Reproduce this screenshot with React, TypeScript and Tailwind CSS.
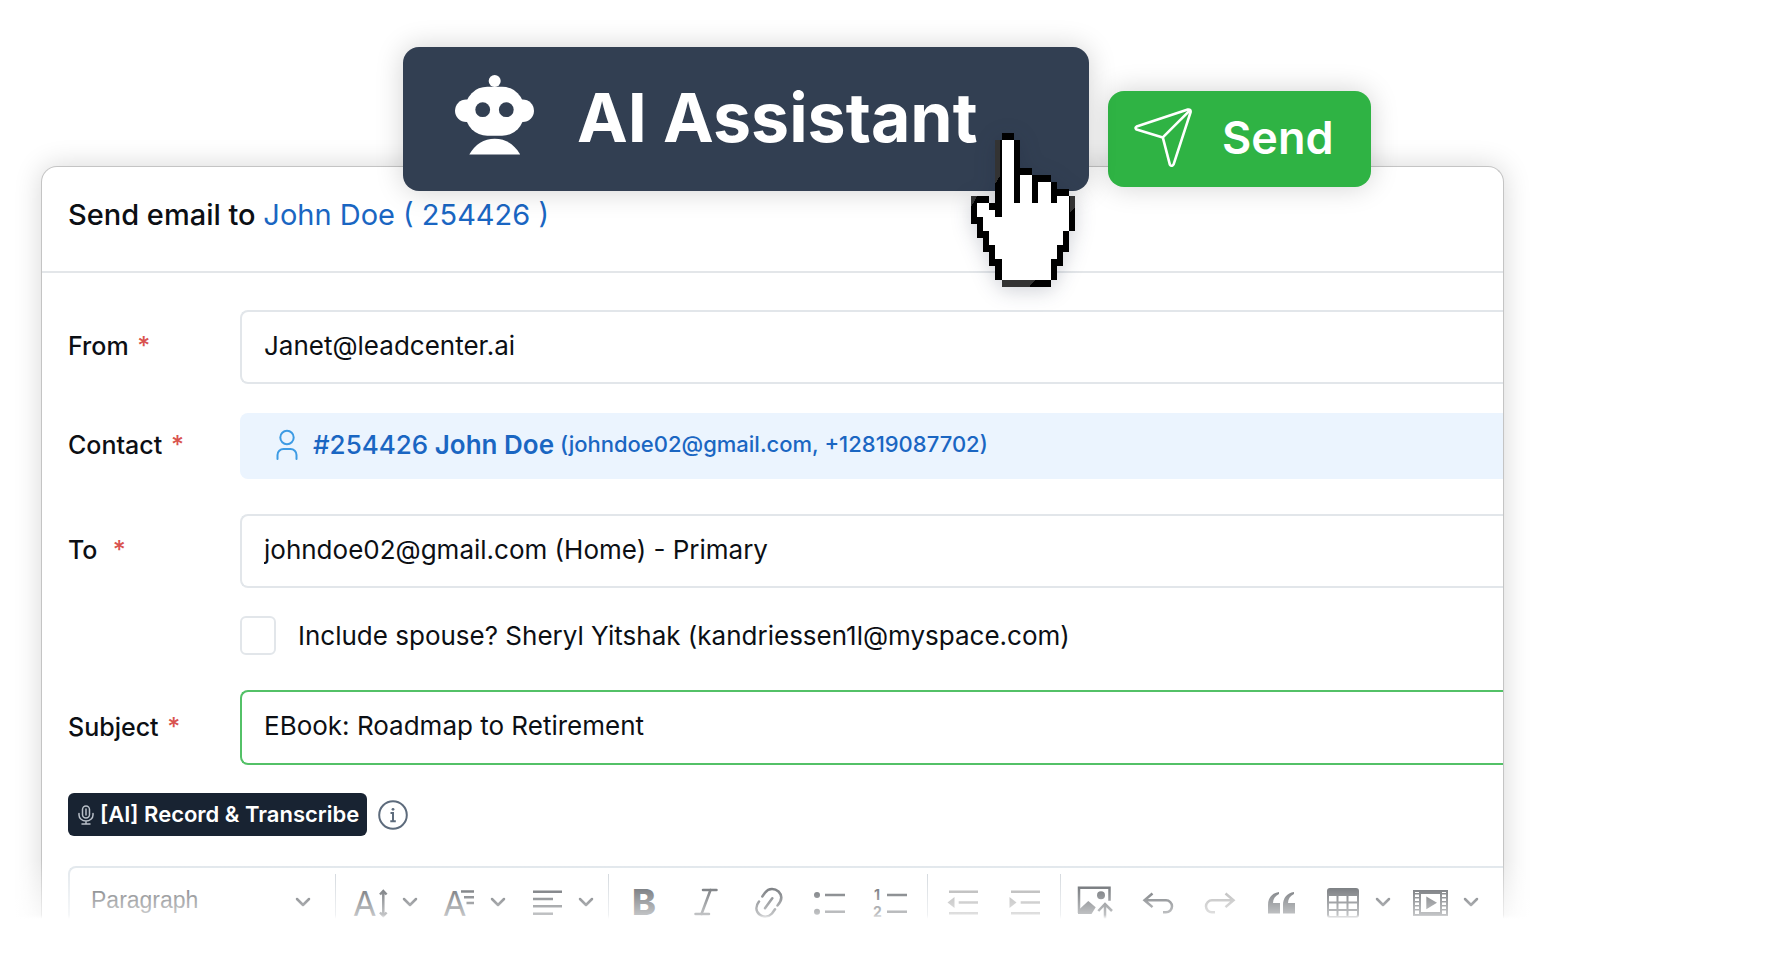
import { useState } from "react";
import type { ReactNode } from "react";
import { ChevronDown, Italic } from "lucide-react";

const ICON_TONE = "size-[34px] shrink-0 overflow-visible fill-none stroke-current stroke-[2.5]";

function RobotIcon() {
  return (
    <svg className="w-[79px] h-20 mb-1 shrink-0" viewBox="0 0 79 80" fill="#fff" aria-hidden="true">
      <circle cx="39.7" cy="6" r="6" />
      <circle cx="11.3" cy="35.7" r="11.3" />
      <circle cx="67.7" cy="35.7" r="11.3" />
      <rect x="10.3" y="11.7" width="58.8" height="49" rx="22" ry="22" />
      <circle cx="27.7" cy="34.7" r="7.4" fill="#323f52" />
      <circle cx="51.3" cy="34.7" r="7.4" fill="#323f52" />
      <path d="M14.3 79.6C20 69 29 63.7 39.7 63.7S59.4 69 65.2 79.6z" />
    </svg>
  );
}

function PlaneIcon() {
  return (
    <svg
      className="w-[58px] h-[59px] shrink-0"
      viewBox="0 0 58 59"
      fill="none"
      stroke="#fff"
      strokeWidth="2.6"
      strokeLinejoin="round"
      strokeLinecap="round"
      aria-hidden="true"
    >
      <path d="M53.8 1.6 2.6 18.6Q.4 20 2.6 21.6L28.8 29.4 35.8 56.4Q37.8 59.2 39.6 56.4L56.6 4.2Q57 1 53.8 1.6z" />
      <path d="M28.8 29.4 55.6 2.6" />
    </svg>
  );
}

// Outline cells of the pixel hand: [column, row, width, height]
const handCells = [
  [5, 0, 2, 1], [4, 1, 1, 11], [7, 1, 1, 9], [8, 5, 2, 1], [10, 6, 3, 1], [10, 7, 1, 3],
  [13, 7, 1, 3], [14, 8, 2, 1], [16, 9, 1, 5], [15, 14, 1, 3], [14, 16, 1, 3], [13, 18, 1, 3],
  [5, 21, 8, 1], [0, 9, 3, 1], [3, 10, 1, 1], [0, 10, 1, 3], [1, 12, 1, 3], [2, 14, 1, 3],
  [3, 16, 1, 3], [4, 18, 1, 3],
];

function HandCursor() {
  return (
    <svg
      className="absolute left-[568px] top-[86px] w-[104px] h-[154px] pointer-events-none overflow-visible drop-shadow-[0_4px_10px_rgba(20,30,60,0.2)]"
      viewBox="0 0 17 22"
      preserveAspectRatio="none"
      shapeRendering="crispEdges"
      aria-hidden="true"
    >
      <path
        fill="#fff"
        d="M5 1h2v5h3v1h3v2h3v5h-1v2h-1v2h-1v3H5v-3H4v-2H3v-2H2v-2H1v-3h2v1h2z"
      />
      {handCells.map(([x, y, w, h], i) => (
        <rect key={i} x={x} y={y} width={w} height={h} fill="#000" />
      ))}
      <path fill="#333" d="M4 1h.7v5.2L4 7.2zM5 21h5.5l-1 1H5zM0 9h1l-1 1.6zM16.2 9h.8v1.6l-.8.8z" />
    </svg>
  );
}

function FieldLabel({ htmlFor, text }: { htmlFor?: string; text: string }) {
  return (
    <label htmlFor={htmlFor} className="w-[172px] shrink-0 font-medium whitespace-pre">
      {text} <span className="ml-0.5 text-[#d9534f]">*</span>
    </label>
  );
}

function ToolButton({ label, muted, children }: { label: string; muted?: boolean; children: ReactNode }) {
  return (
    <button
      type="button"
      aria-label={label}
      className={`flex w-[62px] h-full shrink-0 items-center justify-center ${muted ? "text-[#999]" : "text-[#33383e]"}`}
    >
      {children}
    </button>
  );
}

function ToolDropdown({ label, children }: { label: string; children: ReactNode }) {
  return (
    <button
      type="button"
      aria-label={label}
      className="flex w-[88px] h-full shrink-0 items-center gap-[11px] pl-[13px] text-[#33383e]"
    >
      {children}
      <ChevronDown className="size-6 shrink-0" strokeWidth={2.5} />
    </button>
  );
}

function Divider() {
  return <div className="w-px h-14 mx-1 shrink-0 bg-[#ccd2d8]" />;
}

function EditorToolbar() {
  return (
    <div className="flex h-[70px] items-center rounded-tl-lg border-t-2 border-l-2 border-[#e0e6eb]">
      <div className="relative flex w-[261px] h-full shrink-0 items-center">
        <select
          aria-label="Text style"
          className="w-full h-full appearance-none pl-[21px] pb-1 font-['Liberation_Sans',Arial,sans-serif] text-[23px] text-[#4c4f53] outline-none"
        >
          <option>Paragraph</option>
        </select>
        <ChevronDown className="absolute right-4 size-6 pointer-events-none text-[#33383e]" strokeWidth={2.5} />
      </div>
      <Divider />
      <ToolDropdown label="Font size">
        <svg className={ICON_TONE} viewBox="0 0 34 34">
          <text x="0" y="31" fontSize="34" fill="currentColor" stroke="none">A</text>
          <path d="M30.3 6v25M27 9.5 30.3 6l3.3 3.5M27 27.5l3.3 3.5 3.3-3.5" />
        </svg>
      </ToolDropdown>
      <ToolDropdown label="Font family">
        <svg className={ICON_TONE} viewBox="0 0 34 34">
          <text x="2" y="31" fontSize="34" fill="currentColor" stroke="none">A</text>
          <path d="M20 6.5h13M23 12.2h10M25.5 18H33" />
        </svg>
      </ToolDropdown>
      <ToolDropdown label="Text alignment">
        <svg className={ICON_TONE} viewBox="0 0 34 34">
          <path d="M4 6.7h29M4 14h20M4 21.3h29M4 28.7h20" />
        </svg>
      </ToolDropdown>
      <Divider />
      <ToolButton label="Bold">
        <span className="text-4xl leading-[34px] font-extrabold">B</span>
      </ToolButton>
      <ToolButton label="Italic">
        <Italic className="size-9" strokeWidth={1.7} />
      </ToolButton>
      <ToolButton label="Link">
        <svg className={ICON_TONE} viewBox="0 0 34 34" strokeLinecap="round">
          <path d="M11.3 11.5 14 7.8C18 2.5 24 3.5 27.5 6.5 32 11 30.5 16 26.5 20.5M24 24.3 21 28.5C17.5 32.5 12 32.5 8.5 29.5 4.5 26 4.5 21 8 16.5M14 23.3l7.3-10" />
        </svg>
      </ToolButton>
      <ToolButton label="Bulleted list">
        <svg className={ICON_TONE} viewBox="0 0 34 34">
          <circle cx="4" cy="10" r="3" fill="currentColor" stroke="none" />
          <circle cx="4" cy="26.7" r="3" fill="currentColor" stroke="none" />
          <path d="M12 10h20M12 26.7h20" />
        </svg>
      </ToolButton>
      <ToolButton label="Numbered list">
        <svg className={ICON_TONE} viewBox="0 0 34 34">
          <text x="-1" y="15" fontSize="14" fontWeight="700" fill="currentColor" stroke="none">1</text>
          <text x="-2" y="32" fontSize="14" fontWeight="700" fill="currentColor" stroke="none">2</text>
          <path d="M12 10h20M12 26.7h20" />
        </svg>
      </ToolButton>
      <Divider />
      <ToolButton label="Decrease indent" muted>
        <svg className={ICON_TONE} viewBox="0 0 34 34">
          <path d="M3 6.7h29M3 28.3h29M12.7 17.5H32" />
          <path d="M1.5 17.5 8.5 12v11z" fill="currentColor" stroke="none" />
        </svg>
      </ToolButton>
      <ToolButton label="Increase indent" muted>
        <svg className={ICON_TONE} viewBox="0 0 34 34">
          <path d="M3 6.7h29M3 28.3h29M12.7 17.5H32" />
          <path d="M8.5 17.5 1.5 12v11z" fill="currentColor" stroke="none" />
        </svg>
      </ToolButton>
      <Divider />
      <ToolButton label="Insert image">
        <svg className={ICON_TONE} viewBox="0 0 34 34">
          <path d="M0 28V2.7h30.5v13" />
          <circle cx="22" cy="10.3" r="4" fill="currentColor" stroke="none" />
          <path d="M-1 29v-3.5l10.3-9.5 7.4 6.3L12.5 29z" fill="currentColor" stroke="none" />
          <path d="M26 34V19M19.3 26l6.7-7 7 7" />
        </svg>
      </ToolButton>
      <ToolButton label="Undo">
        <svg className={ICON_TONE} viewBox="0 0 34 34">
          <path d="M3.5 15.3H25a6 6 0 0 1 0 12h-3M11.5 8.5l-8 6.8 8 6.8" />
        </svg>
      </ToolButton>
      <ToolButton label="Redo" muted>
        <svg className={ICON_TONE} viewBox="0 0 34 34">
          <path d="M30.5 15.3H9a6 6 0 0 0 0 12h3M22.5 8.5l8 6.8-8 6.8" />
        </svg>
      </ToolButton>
      <ToolButton label="Block quote">
        <svg className={ICON_TONE} viewBox="0 0 34 34">
          <path
            d="M3 28.5V20C3 13 7 8 14 7v2C10 11 8 14 8 18h7v10.5zM18 28.5V20C18 13 22 8 29 7v2C25 11 23 14 23 18h7v10.5z"
            fill="currentColor"
            stroke="none"
          />
        </svg>
      </ToolButton>
      <ToolDropdown label="Insert table">
        <svg className={ICON_TONE} viewBox="0 0 34 34">
          <rect x="2" y="4" width="30" height="28" rx="2" strokeWidth="2" />
          <path d="M2 4h30v5.5H2z" fill="currentColor" stroke="none" />
          <path d="M2 10h30M2 17.5h30M2 25h30M11.5 10v22M21.5 10v22" strokeWidth="2" />
        </svg>
      </ToolDropdown>
      <ToolDropdown label="Insert media">
        <svg className={ICON_TONE} viewBox="0 0 34 34">
          <path d="M0 6h33v24H0zM6 6v24M27 6v24" strokeWidth="2" />
          <path d="M3 8v20M30 8v20" strokeWidth="4" strokeDasharray="1.5 2.5" />
          <path d="M6 8h21M6 28h21" strokeWidth="2" />
          <path d="M12.3 11.5 23 17.7l-10.7 6.5z" fill="currentColor" stroke="none" />
        </svg>
      </ToolDropdown>
    </div>
  );
}

const INPUT_STYLE =
  "h-full min-w-0 flex-1 rounded-l-lg border-2 border-r-0 bg-white pl-[22px] pb-1 text-[26px] outline-none";

export default function App() {
  const [from, setFrom] = useState("Janet@leadcenter.ai");
  const [to, setTo] = useState("johndoe02@gmail.com (Home) - Primary");
  const [subject, setSubject] = useState("EBook: Roadmap to Retirement");
  const [includeSpouse, setIncludeSpouse] = useState(false);

  return (
    <div className="min-h-screen overflow-hidden bg-white font-[Inter,sans-serif] text-[#0c0f14]">
      <div className="relative z-10 flex items-start gap-[19px] pt-[47px] pl-[403px]">
        <div className="relative">
          <button
            type="button"
            className="flex w-[686px] h-36 items-center rounded-2xl bg-[#323f52] pl-[52px] pb-1 text-[68px] leading-none font-bold text-white shadow-[0_0_28px_rgba(0,0,0,0.18)]"
          >
            <RobotIcon />
            <span className="ml-[43px]">AI Assistant</span>
          </button>
          <HandCursor />
        </div>
        <button
          type="button"
          className="mt-11 flex w-[263px] h-24 items-center rounded-2xl bg-[#2fb344] pl-[26px] pb-1 text-[45px] leading-none font-semibold text-white shadow-[0_0_28px_rgba(0,0,0,0.18)]"
        >
          <PlaneIcon />
          <span className="ml-[30px]">Send</span>
        </button>
      </div>

      <div className="relative">
        <main className="-mt-[25px] ml-[41px] mr-[277px] overflow-hidden rounded-t-2xl border border-b-0 border-[#c4c4c4] bg-white shadow-[0_0_28px_rgba(0,0,0,0.16)]">
          <header className="h-[106px] border-b-2 border-[#e3e6e9] pt-[27px] pl-[26px]">
            <h1 className="text-[29px] leading-[42px] font-medium">
              Send email to{" "}
              <a href="#contact" className="font-normal text-[#1a66c2]">John Doe ( 254426 )</a>
            </h1>
          </header>

          <form className="pt-[37px] pl-[26px] text-[25px]" onSubmit={(e) => e.preventDefault()}>
            <div className="flex h-[74px] items-center">
              <FieldLabel htmlFor="from" text="From" />
              <input
                id="from"
                className={`${INPUT_STYLE} border-[#e2e6ea]`}
                value={from}
                onChange={(e) => setFrom(e.target.value)}
              />
            </div>

            <div className="mt-[29px] flex h-[66px] items-center">
              <FieldLabel text="Contact" />
              <div className="flex h-full min-w-0 flex-1 items-center rounded-l-lg bg-[#ebf4fe] pl-9 pb-1 text-[#1a66c2]">
                <svg
                  className="w-[22px] h-8 mr-[15px] shrink-0"
                  viewBox="0 0 22 32"
                  fill="none"
                  stroke="#3d9be4"
                  strokeWidth="2"
                  strokeLinecap="round"
                  aria-hidden="true"
                >
                  <circle cx="11" cy="9.5" r="6.7" />
                  <path d="M1.5 31V27a6 6 0 0 1 6-6h7a6 6 0 0 1 6 6v4" />
                </svg>
                <span className="text-[26px] font-semibold">
                  <span className="font-medium">#254426</span> John Doe
                </span>
                <span className="ml-1.5 text-[22px] font-medium">(johndoe02@gmail.com, +12819087702)</span>
              </div>
            </div>

            <div className="mt-[35px] flex h-[74px] items-center">
              <FieldLabel htmlFor="to" text="To " />
              <input
                id="to"
                className={`${INPUT_STYLE} border-[#e2e6ea]`}
                value={to}
                onChange={(e) => setTo(e.target.value)}
              />
            </div>

            <div className="mt-[28px] flex items-center pl-[172px]">
              <input
                id="spouse"
                type="checkbox"
                className="w-9 h-[39px] appearance-none rounded-md border-2 border-[#e2e6ea] checked:bg-[#2fb344]"
                checked={includeSpouse}
                onChange={(e) => setIncludeSpouse(e.target.checked)}
              />
              <label htmlFor="spouse" className="pl-[22px] text-[26px] leading-9">
                Include spouse? Sheryl Yitshak (kandriessen1l@myspace.com)
              </label>
            </div>

            <div className="mt-[35px] flex h-[75px] items-center">
              <FieldLabel htmlFor="subject" text="Subject" />
              <input
                id="subject"
                className={`${INPUT_STYLE} border-[#53c167]`}
                value={subject}
                onChange={(e) => setSubject(e.target.value)}
              />
            </div>

            <div className="mt-7 flex items-center gap-[11px]">
              <button
                type="button"
                className="flex h-[43px] items-center gap-1.5 rounded-md bg-[#182332] pl-[10px] pr-2 text-[22px] font-semibold text-white"
              >
                <svg
                  className="w-4 h-5 shrink-0"
                  viewBox="0 0 16 20"
                  fill="none"
                  stroke="#b9c0c9"
                  strokeWidth="1.5"
                  strokeLinecap="round"
                  aria-hidden="true"
                >
                  <rect x="4.5" y="1" width="7" height="12" rx="3.5" />
                  <path d="M1 8.5V10a7 6 0 0 0 14 0V8.5M8 16v3M4 19h8M8 4v6" />
                </svg>
                [AI] Record &amp; Transcribe
              </button>
              <button type="button" aria-label="About recording">
                <svg className="size-[30px]" viewBox="0 0 30 30" fill="none" stroke="#5d6b7c" strokeWidth="2" aria-hidden="true">
                  <circle cx="15" cy="15" r="13.8" />
                  <path d="M12.5 13H15v8M12.3 21.2h5.5" />
                  <circle cx="15" cy="9.3" r="1.4" fill="#5d6b7c" stroke="none" />
                </svg>
              </button>
            </div>

            <div className="mt-[30px]">
              <EditorToolbar />
            </div>
          </form>
        </main>

        {/* the card fades out under the toolbar */}
        <div className="absolute inset-x-0 -bottom-10 h-[130px] pointer-events-none bg-linear-to-b from-transparent from-10% via-white/70 via-53% to-white to-56%" />
      </div>
    </div>
  );
}
